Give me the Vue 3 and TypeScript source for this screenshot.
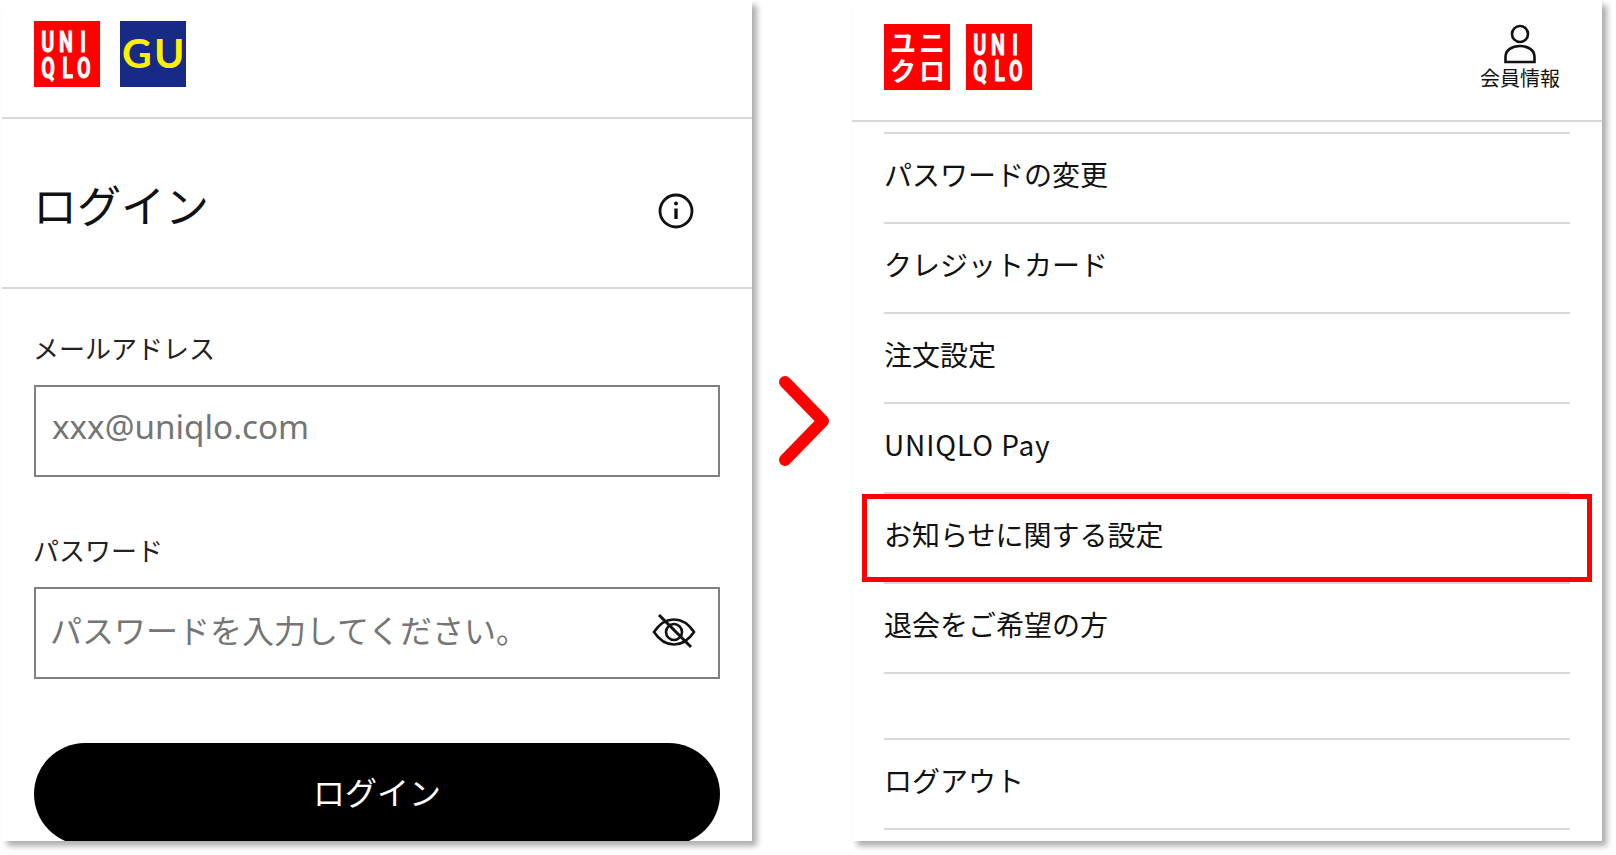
<template>
  <div class="page">
    <!-- ログイン画面 -->
    <section class="panel panel-left">
      <header class="head head-left">
        <svg class="logo" viewBox="0 0 66 66">
          <rect width="66" height="66" fill="#ff0000" />
          <g transform="scale(0.66 1)">
            <text class="logo-text"><tspan x="11" y="31">U</tspan><tspan x="38" y="31">N</tspan><tspan x="70" y="31">I</tspan></text>
            <text class="logo-text"><tspan x="11" y="57">Q</tspan><tspan x="43" y="57">L</tspan><tspan x="65" y="57">O</tspan></text>
          </g>
        </svg>
        <svg class="logo" viewBox="0 0 66 66">
          <rect width="66" height="66" fill="#172a88" />
          <text class="gu-text"><tspan x="2" y="47">G</tspan><tspan x="34" y="47">U</tspan></text>
        </svg>
      </header>
      <div class="title-row">
        <h1>ログイン</h1>
        <svg class="info" viewBox="0 0 36 36" fill="none" stroke="#111" stroke-width="2.800">
          <circle cx="18" cy="18" r="16" />
          <path d="M18 15.5V26" stroke-width="3.400" />
          <circle cx="18" cy="10.5" r="2" fill="#111" stroke="none" />
        </svg>
      </div>
      <form class="form" @submit.prevent>
        <label class="label" for="mail">メールアドレス</label>
        <input id="mail" class="field" type="text" placeholder="xxx@uniqlo.com" />
        <label class="label label-pass" for="pass">パスワード</label>
        <div class="pass-wrap">
          <input id="pass" class="field field-pass" type="password" placeholder="パスワードを入力してください。" />
          <svg class="eye" viewBox="0 0 44 36" fill="none" stroke="#111" stroke-width="2.6">
            <path d="M2 18C8 9 15 5.500 22 5.500S36 9 42 18C36 27 29 30.500 22 30.500S8 27 2 18Z" />
            <circle cx="22" cy="18" r="8" />
            <path d="M7 1L39 33" stroke-width="3" />
          </svg>
        </div>
        <button class="login-btn" type="submit">ログイン</button>
      </form>
    </section>

    <div class="arrow-col">
      <svg class="arrow" viewBox="0 0 50 90" fill="none" stroke="#ff0000" stroke-width="12" stroke-linecap="round" stroke-linejoin="round">
        <path d="M6 6L44 45L6 84" />
      </svg>
    </div>

    <!-- 会員情報メニュー -->
    <section class="panel panel-right">
      <header class="head head-right">
        <div class="logos">
          <svg class="logo" viewBox="0 0 66 66">
            <rect width="66" height="66" fill="#ff0000" />
            <text class="logo-kana"><tspan x="6" y="29">ユ</tspan><tspan x="35" y="29">ニ</tspan></text>
            <text class="logo-kana"><tspan x="6" y="57">ク</tspan><tspan x="35" y="57">ロ</tspan></text>
          </svg>
          <svg class="logo" viewBox="0 0 66 66">
            <rect width="66" height="66" fill="#ff0000" />
            <g transform="scale(0.66 1)">
              <text class="logo-text"><tspan x="11" y="31">U</tspan><tspan x="38" y="31">N</tspan><tspan x="70" y="31">I</tspan></text>
              <text class="logo-text"><tspan x="11" y="57">Q</tspan><tspan x="43" y="57">L</tspan><tspan x="65" y="57">O</tspan></text>
            </g>
          </svg>
        </div>
        <div class="member">
          <svg class="person" viewBox="0 0 34 40" fill="none" stroke="#111" stroke-width="2.6">
            <circle cx="17" cy="10" r="8" />
            <path d="M2.500 38V33C2.500 26 9 22 17 22S31.500 26 31.500 33V38Z" />
          </svg>
          <span>会員情報</span>
        </div>
      </header>
      <ul class="menu">
        <li v-for="item in items" :key="item" class="menu-item" :class="{ latin: item === 'UNIQLO Pay' }">
          {{ item }}
          <span v-if="item === highlighted" class="highlight"></span>
        </li>
        <li class="menu-gap"></li>
        <li class="menu-item">ログアウト</li>
      </ul>
    </section>
  </div>
</template>

<script setup lang="ts">
const highlighted = 'お知らせに関する設定'

const items: string[] = [
  'パスワードの変更',
  'クレジットカード',
  '注文設定',
  'UNIQLO Pay',
  highlighted,
  '退会をご希望の方',
]
</script>

<style>
html,
body {
  margin: 0;
  background: #fff;
  overflow: hidden;
}
</style>

<style scoped>
.page {
  display: flex;
  width: 1616px;
  height: 855px;
  padding-left: 2px;
  box-sizing: border-box;
  background: #fff;
  color: #111;
  font-family: "Noto Sans CJK JP", "Noto Sans", sans-serif;
}

.panel {
  width: 750px;
  height: 841px;
  flex: none;
  background: #fff;
  box-shadow: 5px 5px 6px rgba(0, 0, 0, 0.32);
  overflow: hidden;
}

.arrow-col {
  width: 100px;
  flex: none;
  display: flex;
  padding: 376px 0 0 27px;
  box-sizing: border-box;
}

.arrow {
  width: 50px;
  height: 90px;
}

.head {
  display: flex;
  box-sizing: content-box;
  border-bottom: 2px solid #d9d9d9;
}

.head-left {
  height: 96px;
  padding: 21px 0 0 32px;
  gap: 20px;
}

.head-right {
  height: 96px;
  padding: 24px 42px 0 32px;
  justify-content: space-between;
}

.logos {
  display: flex;
  gap: 16px;
}

.logo {
  width: 66px;
  height: 66px;
  flex: none;
}

.logo-text {
  font-family: Roboto, sans-serif;
  font-size: 30px;
  font-weight: 700;
  fill: #fff;
  stroke: #fff;
  stroke-width: 0.9px;
}

.logo-kana {
  font-family: "Noto Sans CJK JP", sans-serif;
  font-size: 26px;
  font-weight: 700;
  fill: #fff;
}

.gu-text {
  font-family: Lato, sans-serif;
  font-size: 41px;
  font-weight: 700;
  fill: #fff000;
}

.title-row {
  height: 168px;
  box-sizing: content-box;
  display: flex;
  align-items: center;
  justify-content: space-between;
  padding: 0 58px 0 31px;
  border-bottom: 2px solid #d9d9d9;
}

.title-row h1 {
  margin: 2px 0 0;
  font-size: 44px;
  line-height: 60px;
  font-weight: 400;
}

.info {
  width: 36px;
  height: 36px;
  margin-top: 16px;
}

.form {
  display: flex;
  flex-direction: column;
  padding: 41px 32px 0;
}

.label {
  font-size: 26px;
  line-height: 36px;
  height: 55px;
  margin-left: -1px;
  color: #222;
}

.label-pass {
  margin-top: 55px;
}

.field {
  width: 100%;
  height: 92px;
  box-sizing: border-box;
  border: 2px solid #808080;
  border-radius: 0;
  padding: 0 16px 9px;
  font-family: "Noto Sans", "Noto Sans CJK JP", sans-serif;
  font-size: 33.200px;
  color: #111;
  background: #fff;
  outline: none;
}

.field::placeholder {
  color: #757575;
  opacity: 1;
}

.pass-wrap {
  position: relative;
}

.field-pass {
  display: block;
  padding: 0 14px 9px;
  font-family: "Noto Sans CJK JP", sans-serif;
  font-size: 32px;
}

.eye {
  position: absolute;
  top: 27px;
  right: 24px;
  width: 44px;
  height: 36px;
}

.login-btn {
  margin-top: 64px;
  height: 102px;
  border: none;
  border-radius: 51px;
  background: #000;
  color: #fff;
  font-family: inherit;
  font-size: 32px;
  padding: 0 0 6px;
}

.member {
  display: flex;
  flex-direction: column;
  align-items: center;
  font-size: 20px;
  line-height: 28px;
}

.person {
  width: 34px;
  height: 40px;
}

.menu {
  list-style: none;
  margin: 10px 32px 0;
  padding: 0;
  border-top: 2px solid #d9d9d9;
}

.menu-item {
  position: relative;
  height: 90px;
  box-sizing: border-box;
  display: flex;
  align-items: center;
  padding-bottom: 8px;
  border-bottom: 2px solid #d9d9d9;
  font-size: 28px;
}

.menu-item.latin {
  letter-spacing: 0.9px;
}

.menu-gap {
  height: 66px;
  border-bottom: 2px solid #d9d9d9;
  box-sizing: border-box;
}

.highlight {
  position: absolute;
  top: 0;
  left: -22px;
  right: -22px;
  bottom: 0;
  border: 5px solid #ff0000;
}
</style>
